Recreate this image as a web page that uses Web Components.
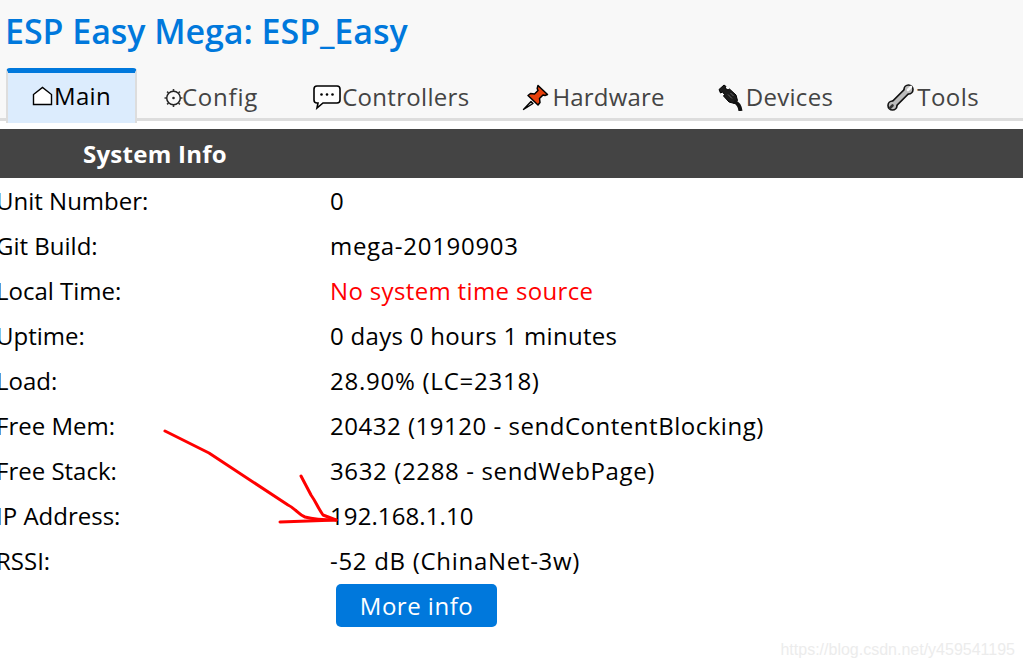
<!DOCTYPE html>
<html>
<head>
<meta charset="utf-8">
<title>ESP Easy Mega</title>
<style>
  html, body { margin: 0; padding: 0; background: #fff; overflow: hidden; }
  body { font-family: "Open Sans", "Noto Sans", sans-serif; color: #000; height: 668px; position: relative; }
</style>
</head>
<body>
<esp-page>
  <esp-header title-text="ESP Easy Mega: ESP_Easy"></esp-header>
  <esp-section heading="System Info">
    <esp-row label="Unit Number:">0</esp-row>
    <esp-row label="Git Build:" ls=".7">mega-20190903</esp-row>
    <esp-row label="Local Time:" ls=".35"><span style="color:#f00">No system time source</span></esp-row>
    <esp-row label="Uptime:" ls=".3">0 days 0 hours 1 minutes</esp-row>
    <esp-row label="Load:" ls=".75">28.90% (LC=2318)</esp-row>
    <esp-row label="Free Mem:" ls=".52">20432 (19120 - sendContentBlocking)</esp-row>
    <esp-row label="Free Stack:" ls=".63">3632 (2288 - sendWebPage)</esp-row>
    <esp-row label="IP Address:" ls=".1">192.168.1.10</esp-row>
    <esp-row label="RSSI:" ls=".7">-52 dB (ChinaNet-3w)</esp-row>
  </esp-section>
  <esp-button>More info</esp-button>
</esp-page>
<esp-scribble></esp-scribble>

<script>
const ICONS = {
  home: `<svg width="21" height="20" viewBox="0 0 21 20"><path d="M1.500 8.500 10.500 1.500l9 7V18.500h-18z" fill="#fff" stroke="#000" stroke-width="1.400"/></svg>`,
  gear: `<svg width="19" height="20" viewBox="0 0 19 20"><circle cx="9.500" cy="10" r="6.800" fill="none" stroke="#222" stroke-width="1.500"/><circle cx="9.500" cy="10" r="1.300" fill="#222"/><path d="M9.500 1v2M9.500 17v2M.5 10h2M16.500 10h2M3.100 3.600l1.400 1.400M14.500 15l1.400 1.400M3.100 16.400 4.500 15M14.500 5l1.400-1.400" stroke="#333" stroke-width="1.600"/></svg>`,
  chat: `<svg width="28" height="25" viewBox="0 0 28 25"><path d="M4 1h20a3 3 0 0 1 3 3v11a3 3 0 0 1-3 3H10l-6 5 1-5H4a3 3 0 0 1-3-3V4a3 3 0 0 1 3-3z" fill="#fff" stroke="#000" stroke-width="1.600"/><circle cx="8.500" cy="9.500" r="1.300"/><circle cx="14" cy="9.500" r="1.300"/><circle cx="19.500" cy="9.500" r="1.300"/></svg>`,
  pin: `<svg width="27" height="27" viewBox="0 0 27 27"><path d="M1.500 25.500 9 17.500l2 2z" fill="#ddd" stroke="#000" stroke-width="1.400" stroke-linejoin="round"/><path d="M16 1.500 25.500 10.500l-2.500 1-2-.5-3.500 3.500.5 4-2 2.500L6 11.500l2.500-2 4 .5L16 6.500l-.8-2z" fill="#e8400c" stroke="#000" stroke-width="1.500" stroke-linejoin="round"/></svg>`,
  plug: `<svg width="25" height="27" viewBox="0 0 25 27"><path d="M1 5.500 6 1l2 1.500-1 1.500 3 2 1.500-1L18 11l1.500 5.500-3 3-5.500-1.500L5.500 12l1-1.500-2-2.500-2 1z" fill="#1c1c1c" stroke="#000"/><path d="M16 17.500c4 1.500 6 4.500 6.500 9.500" fill="none" stroke="#111" stroke-width="4"/><path d="M10 10.500l4 4M12.500 9l3 3" stroke="#666"/></svg>`,
  tool: `<svg width="27" height="27" viewBox="0 0 27 27" stroke-linecap="round"><path d="M7 20 20 7" stroke="#111" stroke-width="7.500"/><circle cx="5.500" cy="21.500" r="4.500" fill="#bbb" stroke="#111" stroke-width="1.600"/><circle cx="21.500" cy="5.500" r="4.500" fill="#bbb" stroke="#111" stroke-width="1.600"/><path d="M7 20 20 7" stroke="#bbb" stroke-width="4.500"/><path d="M24 3l-3 3" stroke="#f8f8f8" stroke-width="2.600"/><path d="M5.500 21.500l-2.500 2.500" stroke="#333" stroke-width="2.600"/></svg>`
};

class EspPage extends HTMLElement {
  constructor() {
    super();
    this.attachShadow({ mode: 'open' });
    this.shadowRoot.innerHTML = `
      <style>
        :host { display: flex; flex-direction: column; width: 1023px; }
      </style>
      <slot></slot>`;
  }
}

class EspTab extends HTMLElement {
  constructor() {
    super();
    this.attachShadow({ mode: 'open' });
    const icon = ICONS[this.getAttribute('icon')] || '';
    this.shadowRoot.innerHTML = `
      <style>
        :host { display: flex; align-items: center; box-sizing: border-box; height: 51px; padding: 0 var(--pr, 27px) 2px 27px; margin-top: 4px; color: #444; font-size: 24px; letter-spacing: var(--ls, .3px); white-space: nowrap; }
        :host([active]) { height: 55px; margin-top: 0; padding: 0 24px 5px 24px; color: #000; background: #dcecfd; border: solid #ddd; border-width: 0 2px; border-top: 5px solid #0078dc; border-radius: 4px 4px 0 0; }
        svg { display: block; }
        .i { display: flex; margin-right: var(--gap, 1px); margin-top: 2px; }
        :host([active]) .i { margin-top: 0; }
      </style>
      <span class="i">${icon}</span><slot></slot>`;
  }
}

class EspHeader extends HTMLElement {
  constructor() {
    super();
    this.attachShadow({ mode: 'open' });
    this.shadowRoot.innerHTML = `
      <style>
        :host { display: block; background: #f8f8f8; height: 121px; box-sizing: border-box; border-bottom: 3px solid #ddd; position: relative; }
        h1 { margin: 0; padding: 9px 0 0 5px; height: 59px; box-sizing: border-box; font-size: 34px; line-height: 44px; font-weight: 600; color: #0078dc; letter-spacing: -0.05px; white-space: nowrap; }
        nav { display: flex; padding-left: 6px; height: 55px; margin-top: 9px; }
      </style>
      <h1>${this.getAttribute('title-text')}</h1>
      <nav>
        <esp-tab icon="home" active>Main</esp-tab>
        <esp-tab icon="gear" style="--gap:-1px;--ls:.8px;--pr:28px">Config</esp-tab>
        <esp-tab icon="chat" style="--pr:26px">Controllers</esp-tab>
        <esp-tab icon="pin" style="--gap:3px;--ls:.2px;--pr:26px">Hardware</esp-tab>
        <esp-tab icon="plug" style="--gap:3px;--pr:27px">Devices</esp-tab>
        <esp-tab icon="tool" style="--gap:3px;--ls:.5px">Tools</esp-tab>
      </nav>`;
  }
}

class EspSection extends HTMLElement {
  constructor() {
    super();
    this.attachShadow({ mode: 'open' });
    this.shadowRoot.innerHTML = `
      <style>
        :host { display: block; margin-top: 8px; }
        h3 { margin: 0; height: 49px; line-height: 50px; padding-left: 83px; background: #444; color: #fff; font-size: 24px; font-weight: 700; letter-spacing: .25px; }
        .rows { display: flex; flex-direction: column; }
      </style>
      <h3>${this.getAttribute('heading')}</h3>
      <div class="rows"><slot></slot></div>`;
  }
}

class EspRow extends HTMLElement {
  constructor() {
    super();
    this.attachShadow({ mode: 'open' });
    const ls = this.getAttribute('ls') || '0';
    this.shadowRoot.innerHTML = `
      <style>
        :host { display: grid; grid-template-columns: 334px 1fr; height: 45px; line-height: 46px; font-size: 24px; margin-left: -4px; white-space: nowrap; }
        .v { letter-spacing: ${ls}px; }
      </style>
      <span>${this.getAttribute('label')}</span>
      <span class="v"><slot></slot></span>`;
  }
}

class EspButton extends HTMLElement {
  constructor() {
    super();
    this.attachShadow({ mode: 'open' });
    this.shadowRoot.innerHTML = `
      <style>
        :host { display: block; margin: 1px 0 0 336px; }
        a { display: flex; align-items: center; justify-content: center; width: 161px; height: 43px; background: #0078dc; color: #fff; border-radius: 5px; font-size: 24px; letter-spacing: .5px; }
      </style>
      <a><slot></slot></a>`;
  }
}

// red pen marks and the blog watermark on top of the screenshot
class EspScribble extends HTMLElement {
  constructor() {
    super();
    this.attachShadow({ mode: 'open' });
    this.shadowRoot.innerHTML = `
      <style>
        :host { display: block; position: absolute; inset: 0; pointer-events: none; }
        svg { position: absolute; left: 0; top: 0; }
        .mark { position: absolute; right: 8px; top: 641px; font: 16px "Liberation Sans", sans-serif; color: #ececec; white-space: nowrap; }
      </style>
      <svg width="1023" height="668" fill="none" stroke="#f00" stroke-width="3" stroke-linecap="round" stroke-linejoin="round">
        <path d="M165 431 209 453 288 505C296 509 298 514 305 517 312 519 322 520 336 520"/>
        <path d="M301 476 311 495C316 502 318 508 323 515L336 520"/>
        <path d="M280 522 336 520"/>
      </svg>
      <div class="mark">https://blog.csdn.net/y459541195</div>`;
  }
}

customElements.define('esp-page', EspPage);
customElements.define('esp-tab', EspTab);
customElements.define('esp-header', EspHeader);
customElements.define('esp-section', EspSection);
customElements.define('esp-row', EspRow);
customElements.define('esp-button', EspButton);
customElements.define('esp-scribble', EspScribble);
</script>
</body>
</html>
